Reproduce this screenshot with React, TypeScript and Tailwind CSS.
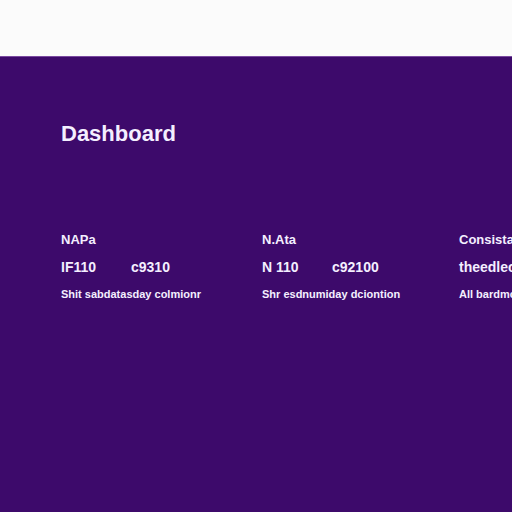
import React from "react";

const cols = [
  { label: "NAPa", a: "IF110", b: "c9310", note: "Shit sabdatasday colmionr", w: "w-[201px]" },
  { label: "N.Ata", a: "N 110", b: "c92100", note: "Shr esdnumiday dciontion", w: "w-[197px]" },
  { label: "Consista", a: "theedlec", b: "", note: "All bardmc", w: "w-[60px]" },
];

export default function App() {
  return (
    <div
      className="w-[512px] h-[512px] overflow-hidden flex flex-col bg-[#3d0a6b]"
      style={{ fontFamily: '"Liberation Sans", Arial, sans-serif' }}
    >
      <div className="h-[57px] bg-[#fbfbfb] border-b border-[#7a4aa0] shrink-0" />
      <div className="flex-1 pl-[61px] pt-[64px] text-[#f4efff]">
        <h1 className="text-[22px] font-bold leading-[26px] m-0">Dashboard</h1>
        <div className="flex mt-[85px] whitespace-nowrap">
          {cols.map((c, i) => (
            <div key={i} className={`${c.w} shrink-0 flex flex-col`}>
              <div className="text-[13px] font-bold leading-[16px]">{c.label}</div>
              <div className="flex mt-[11px] text-[14px] font-bold leading-[16px]">
                <span className="w-[70px]">{c.a}</span>
                <span>{c.b}</span>
              </div>
              <div className="mt-[12px] text-[11px] font-bold leading-[14px]">{c.note}</div>
            </div>
          ))}
        </div>
      </div>
    </div>
  );
}
